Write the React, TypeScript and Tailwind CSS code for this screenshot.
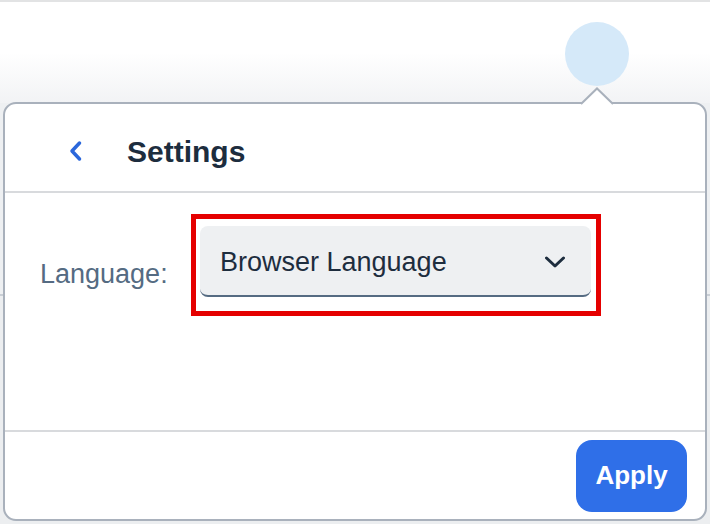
import React from "react";

export default function App() {
  const font = { fontFamily: '"Liberation Sans", Arial, sans-serif' };
  return (
    <div
      className="relative w-[710px] h-[524px] overflow-hidden bg-[#eceef0]"
      style={font}
    >
      {/* top shell bar */}
      <div className="h-[103px] border-t-2 border-[#e2e3e4] bg-gradient-to-b from-white via-white to-[#f2f3f5] flex justify-end items-start pt-[20px] pr-[81px]">
        <div className="w-[64px] h-[64px] rounded-full bg-[#d5e9f9]" />
      </div>
      {/* page content line behind */}
      <div className="h-[193px] bg-[#eef0f2] border-b-2 border-[#c9ced5]" />

      {/* popover */}
      <div className="absolute left-[3px] top-[102px] w-[704px] h-[419px] border-2 border-[#a9b1bc] rounded-[13px] bg-white flex flex-col overflow-hidden">
        {/* header */}
        <div className="h-[89px] shrink-0 border-b-2 border-[#d8dadd] flex items-start pl-[62px]">
          <svg
            width="16"
            height="22"
            viewBox="0 0 16 22"
            className="mt-[36px]"
          >
            <polyline
              points="12.5,3 5,11 12.5,19"
              fill="none"
              stroke="#2b67db"
              strokeWidth="3.5"
              strokeLinecap="round"
              strokeLinejoin="round"
            />
          </svg>
          <div className="ml-[44px] mt-[30px] text-[30px] leading-[36px] font-bold text-[#1d2d3e]">
            Settings
          </div>
        </div>
        {/* body */}
        <div className="h-[237px] shrink-0 flex items-start pt-[21px] pl-[35px]">
          <div className="w-[151px] shrink-0 mt-[44px] text-[27px] leading-[32px] text-[#556b82]">
            Language:
          </div>
          <div className="w-[410px] h-[102px] border-[5px] border-[#e50000] pt-[7px] pl-[4px] pr-[5px] pb-[14px]">
            <div className="w-[391px] h-[71px] bg-[#eef0f2] rounded-[8px] border-b-2 border-[#556b82] flex items-center justify-between pl-[20px] pr-[25px]">
              <span className="mt-[3px] text-[27px] leading-[31px] text-[#1d2d3e]">
                Browser Language
              </span>
              <svg width="22" height="12" viewBox="0 0 22 12" className="mt-[2px]">
                <polyline
                  points="2.5,2 11,10 19.5,2"
                  fill="none"
                  stroke="#1d2d3e"
                  strokeWidth="3"
                  strokeLinecap="round"
                  strokeLinejoin="round"
                />
              </svg>
            </div>
          </div>
        </div>
        {/* footer */}
        <div className="flex-1 border-t-2 border-[#d8dadd] flex items-center justify-end pr-[18px]">
          <button className="w-[111px] h-[72px] rounded-[16px] bg-[#2f6fe8] text-white text-[26px] font-bold">
            Apply
          </button>
        </div>
      </div>

      {/* arrow */}
      <svg
        className="absolute left-[580px] top-[87px]"
        width="34"
        height="18"
        viewBox="0 0 34 18"
      >
        <path d="M0 18 L17 1 L34 18 Z" fill="white" />
        <path
          d="M1 17 L17 1.5 L33 17"
          fill="none"
          stroke="#a9b1bc"
          strokeWidth="2"
        />
      </svg>
    </div>
  );
}
